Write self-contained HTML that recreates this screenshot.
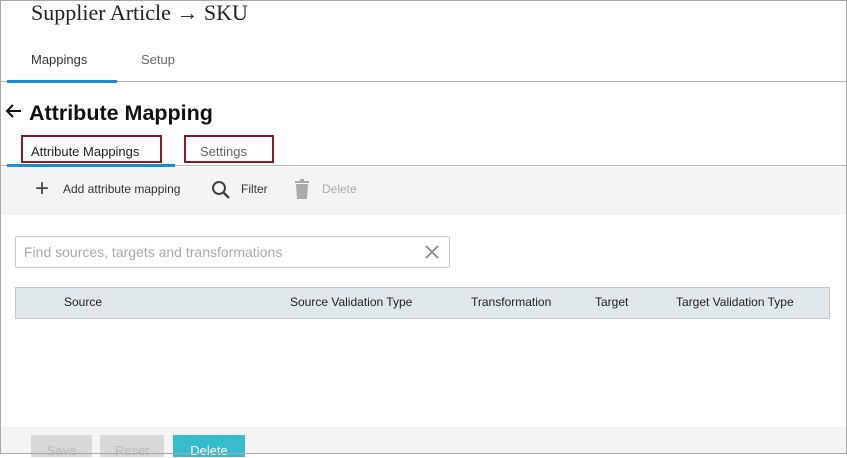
<!DOCTYPE html>
<html><head><meta charset="utf-8"><style>
*{margin:0;padding:0;box-sizing:border-box}
body{width:847px;height:454px;overflow:hidden;background:#fff;font-family:"Liberation Sans",sans-serif;position:relative;}
.a{position:absolute;white-space:nowrap}
</style></head><body>
<div class="a" style="left:31px;top:0px;font-family:'Liberation Serif',serif;font-size:22px;color:#222">Supplier Article → SKU</div>
<div class="a" style="left:31px;top:52px;font-size:13px;color:#333">Mappings</div>
<div class="a" style="left:141px;top:52px;font-size:13px;color:#666">Setup</div>
<div class="a" style="left:0;top:81px;width:847px;height:1px;background:#b8b8b8"></div>
<div class="a" style="left:7px;top:80px;width:110px;height:3px;background:#1a8fd0"></div>
<svg class="a" style="left:5px;top:103px" width="18" height="16" viewBox="0 0 18 16"><path d="M16 8H2M8 2L2 8l6 6" stroke="#111" stroke-width="2" fill="none"/></svg>
<div class="a" style="left:29px;top:101px;font-size:21.5px;font-weight:bold;color:#111">Attribute Mapping</div>
<div class="a" style="left:31px;top:144px;font-size:13px;color:#222">Attribute Mappings</div>
<div class="a" style="left:200px;top:144px;font-size:13px;color:#666">Settings</div>
<div class="a" style="left:0;top:165px;width:847px;height:1px;background:#b8b8b8"></div>
<div class="a" style="left:7px;top:164px;width:168px;height:3px;background:#1a8fd0"></div>
<div class="a" style="left:21px;top:135px;width:141px;height:28px;border:2px solid #8b1a24"></div>
<div class="a" style="left:184px;top:135px;width:90px;height:28px;border:2px solid #8b1a24"></div>
<div class="a" style="left:0;top:167px;width:847px;height:48px;background:#f4f4f4"></div>
<div class="a" style="left:35px;top:177px;font-size:24px;color:#444;line-height:24px;font-weight:300">+</div>
<div class="a" style="left:63px;top:182px;font-size:12px;color:#333">Add attribute mapping</div>
<svg class="a" style="left:211px;top:180px" width="20" height="20" viewBox="0 0 20 20"><circle cx="8" cy="8" r="6" stroke="#444" stroke-width="2" fill="none"/><path d="M12.5 12.5L18 18" stroke="#444" stroke-width="2.4"/></svg>
<div class="a" style="left:241px;top:182px;font-size:12px;color:#333">Filter</div>
<svg class="a" style="left:294px;top:179px" width="16" height="20" viewBox="0 0 16 20"><rect x="1" y="2" width="14" height="2" fill="#aaa"/><rect x="6" y="0" width="4" height="2" fill="#aaa"/><path d="M2 5h12l-1 15H3z" fill="#aaa"/></svg>
<div class="a" style="left:322px;top:182px;font-size:12px;color:#aaa">Delete</div>
<div class="a" style="left:15px;top:236px;width:435px;height:32px;border:1px solid #c8c8c8;border-radius:2px"></div>
<div class="a" style="left:24px;top:244px;font-size:14px;color:#aaa">Find sources, targets and transformations</div>
<svg class="a" style="left:425px;top:245px" width="14" height="14" viewBox="0 0 14 14"><path d="M1 1l12 12M13 1L1 13" stroke="#777" stroke-width="1.5"/></svg>
<div class="a" style="left:15px;top:287px;width:815px;height:32px;background:#e1e8eb;border:1px solid #c4c8ca"></div>
<div class="a" style="left:64px;top:295px;font-size:12px;color:#222">Source</div>
<div class="a" style="left:290px;top:295px;font-size:12px;color:#222">Source Validation Type</div>
<div class="a" style="left:471px;top:295px;font-size:12px;color:#222">Transformation</div>
<div class="a" style="left:595px;top:295px;font-size:12px;color:#222">Target</div>
<div class="a" style="left:676px;top:295px;font-size:12px;color:#222">Target Validation Type</div>
<div class="a" style="left:0;top:427px;width:847px;height:27px;background:#f4f4f4"></div>
<div class="a" style="left:31px;top:435px;width:61px;height:22px;background:#d8d8d8;color:#bbb;font-size:13px;text-align:center;padding-top:8px">Save</div>
<div class="a" style="left:100px;top:435px;width:64px;height:22px;background:#d8d8d8;color:#bbb;font-size:13px;text-align:center;padding-top:8px">Reset</div>
<div class="a" style="left:173px;top:435px;width:72px;height:22px;background:#35bccd;color:#fff;font-size:13px;text-align:center;padding-top:8px">Delete</div>
<div class="a" style="left:0;top:0;width:847px;height:454px;border:1px solid #a8a8a8"></div>
</body></html>
